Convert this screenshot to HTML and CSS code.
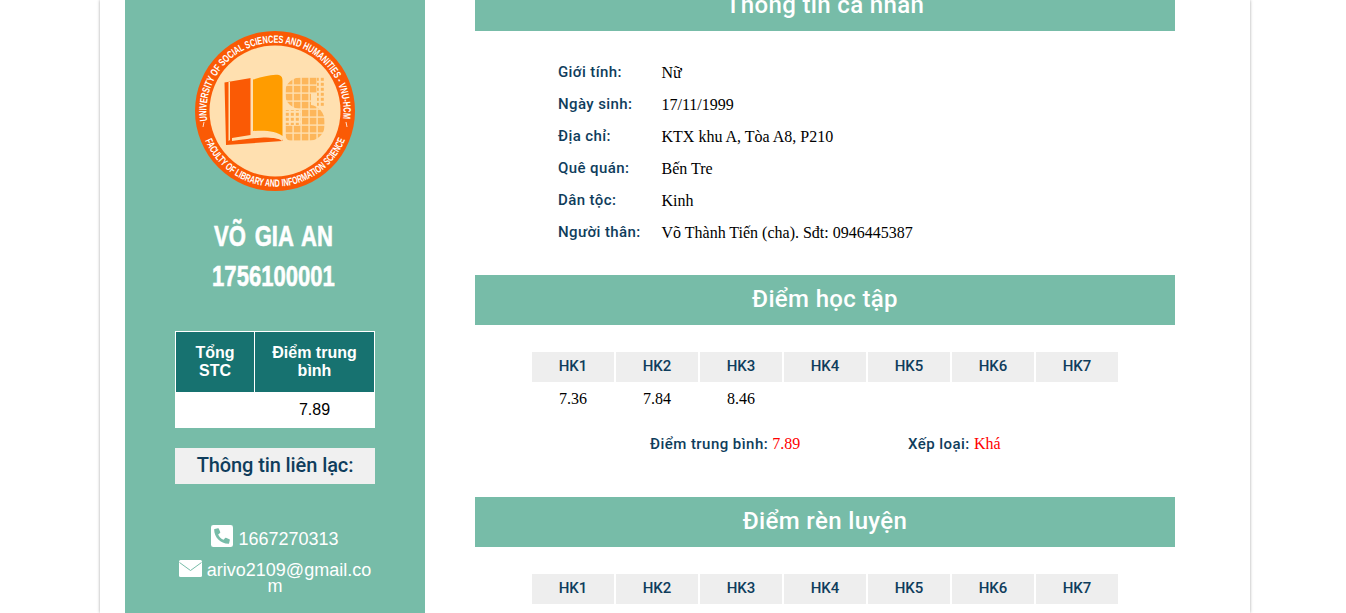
FILE: index.html
```html
<!DOCTYPE html>
<html lang="vi">
<head>
<meta charset="utf-8">
<title>Võ Gia An</title>
<link rel="stylesheet" href="styles.css">
</head>
<body>
<div class="card">
  <aside class="side">
    <svg class="logo" viewBox="0 0 160 160" width="160" height="160">
      <defs>
        <pattern id="sgrid" width="8" height="8" patternUnits="userSpaceOnUse" x="90" y="46">
          <rect width="8" height="8" fill="#ffe0b0"/>
          <rect x="0.8" y="0.8" width="6.6" height="6.6" fill="#fdb65a"/>
        </pattern>
        <pattern id="sdots" width="5" height="5" patternUnits="userSpaceOnUse" x="90" y="46">
          <rect x="0.8" y="0.8" width="3" height="3" fill="#fdb65a"/>
        </pattern>
        <path id="arcTop" d="M 12.2 90 A 68.5 68.5 0 1 1 147.8 90"/>
        <path id="arcBottom" d="M 8 104 A 76 76 0 0 0 152 104"/>
      </defs>
      <circle cx="80" cy="80" r="80" fill="#fa5a05"/>
      <circle cx="80" cy="80" r="65.5" fill="#ffe0b0"/>
      <text class="ring"><textPath href="#arcTop" textLength="232" lengthAdjust="spacingAndGlyphs">UNIVERSITY OF SOCIAL SCIENCES AND HUMANITIES - VNU-HCM</textPath></text>
      <text class="ring"><textPath href="#arcBottom" textLength="178" startOffset="6" lengthAdjust="spacingAndGlyphs">FACULTY OF LIBRARY AND INFORMATION SCIENCE</textPath></text>
      <path d="M8 96l1-5M152 96l-1-5" stroke="#fff" stroke-width="0.8"/>
      <path d="M29.500 51.500 L56 47 L56 104 L87 108 L87.500 110 L31 114 Z" fill="#fa5a05"/>
      <path d="M33.500 51 L35 51 L35 109 L33.500 110 Z" fill="#ffe0b0"/>
      <path d="M55.500 47 L57 47 L57 102 C 70 101 83 101 87 108 L87 110 C 80 105 65 106 37 110 L37 107 L55.500 104 Z" fill="#ffe0b0"/>
      <path d="M58 48.500 C 68 46 76 43 84 44 C 87 45 87.500 47 87.500 50 L87.500 105 C 82 100 70 99 58 100 Z" fill="#ff9c00"/>
      <path d="M90 62 C 90 52 98 46 108 46 L122 46 L122 62 L116 62 L116 74 C 123 75 130 81 130 92 C 130 104 122 110 112 110 L96 110 C 92 110 90 106 90 102 L90 94 L107 94 L107 78 C 97 78 90 72 90 62 Z" fill="url(#sgrid)"/>
      <path d="M122 46 H130 V76 H122 Z M90 79 H106 V94 H90 Z" fill="url(#sdots)"/>
    </svg>
    <h1 class="student">VÕ GIA AN<br>1756100001</h1>
    <table class="summary">
      <thead>
        <tr><th class="col-credits">Tổng STC</th><th>Điểm trung bình</th></tr>
      </thead>
      <tbody>
        <tr><td></td><td>7.89</td></tr>
      </tbody>
    </table>
    <h3 class="contact-title">Thông tin liên lạc:</h3>
    <p class="contact contact-phone">
      <svg class="icon-phone" viewBox="0 0 448 448" width="22" height="22">
        <rect width="448" height="448" rx="48" fill="#fff"/>
        <path transform="translate(448,-32) scale(-1,1)" d="M94 416c-7.033 0-13.057-4.873-14.616-11.627l-14.998-65a15 15 0 0 1 8.707-17.16l69.998-29.999a15 15 0 0 1 17.518 4.289l30.997 37.885c48.944-22.963 88.297-62.858 110.781-110.78l-37.886-30.997a15.001 15.001 0 0 1-4.289-17.518l30-69.998a15 15 0 0 1 17.16-8.707l65 14.998A14.997 14.997 0 0 1 384 126c0 160.292-129.945 290-290 290z" fill="#77bca8"/>
      </svg>
      1667270313
    </p>
    <p class="contact contact-mail">
      <svg class="icon-mail" viewBox="0 0 23 17" width="23" height="17">
        <rect width="23" height="17" rx="1.500" fill="#fff"/>
        <path d="M0.500 2.500 L11.500 10.500 L22.500 2.500" fill="none" stroke="#77bca8" stroke-width="1"/>
      </svg>&nbsp;arivo2109@gmail.com
    </p>
  </aside>
  <main class="main">
    <h2 class="band band-first">Thông tin cá nhân</h2>
    <dl class="info">
      <dt>Giới tính:</dt><dd>Nữ</dd>
      <dt>Ngày sinh:</dt><dd>17/11/1999</dd>
      <dt>Địa chỉ:</dt><dd>KTX khu A, Tòa A8, P210</dd>
      <dt>Quê quán:</dt><dd>Bến Tre</dd>
      <dt>Dân tộc:</dt><dd>Kinh</dd>
      <dt>Người thân:</dt><dd>Võ Thành Tiến (cha). Sđt: 0946445387</dd>
    </dl>
    <h2 class="band">Điểm học tập</h2>
    <div class="terms">
      <div class="term">HK1</div><div class="term">HK2</div><div class="term">HK3</div><div class="term">HK4</div><div class="term">HK5</div><div class="term">HK6</div><div class="term">HK7</div>
      <div class="score">7.36</div><div class="score">7.84</div><div class="score">8.46</div><div class="score"></div><div class="score"></div><div class="score"></div><div class="score"></div>
    </div>
    <div class="totals">
      <p class="total total-avg">Điểm trung bình: <span class="red">7.89</span></p>
      <p class="total">Xếp loại: <span class="red">Khá</span></p>
    </div>
    <h2 class="band">Điểm rèn luyện</h2>
    <div class="terms">
      <div class="term">HK1</div><div class="term">HK2</div><div class="term">HK3</div><div class="term">HK4</div><div class="term">HK5</div><div class="term">HK6</div><div class="term">HK7</div>
    </div>
  </main>
</div>
</body>
</html>
```
FILE: styles.css
```css
* { box-sizing: border-box; }
html, body { height: 100%; }
body {
  margin: 0;
  overflow: hidden;
  background: #fff;
  font-family: "Liberation Serif", serif;
  font-size: 16px;
  color: #000;
}
.card {
  width: 1150px;
  height: 613px;
  margin-left: 100px;
  padding-left: 25px;
  display: flex;
  gap: 50px;
  overflow: hidden;
  box-shadow: 0 0 3px rgba(0, 0, 0, 0.35);
}
.side {
  width: 300px;
  flex: none;
  padding-top: 31px;
  background: #77bca8;
  display: flex;
  flex-direction: column;
  align-items: center;
}
.logo { display: block; flex: none; }
.ring {
  font-family: "Liberation Sans", sans-serif;
  font-weight: 700;
  font-size: 10.5px;
  fill: #fff;
}
.student {
  margin: 25px 4px 35px 0;
  font-family: "Liberation Sans", sans-serif;
  font-size: 30px;
  line-height: 40px;
  font-weight: 700;
  word-spacing: 3.6px;
  color: #fff;
  text-align: center;
  transform: scaleX(0.735);
  -webkit-text-stroke: 0.6px #fff;
}
.summary {
  width: 200px;
  border-collapse: collapse;
  background: #fff;
  font-family: "Liberation Sans", sans-serif;
  font-size: 16px;
}
.summary th {
  height: 61px;
  padding: 0 10px;
  line-height: 18px;
  background: #177270;
  color: #fff;
  font-weight: 700;
  border: 1px solid #fff;
}
.summary .col-credits { width: 79px; }
.summary td { height: 35px; padding: 0; text-align: center; }
.contact-title {
  width: 200px;
  height: 36px;
  margin: 20px 0 0;
  background: #f0f0f0;
  color: #0f3d5c;
  font-family: "Roboto", sans-serif;
  font-size: 20px;
  font-weight: 500;
  letter-spacing: -0.1px;
  line-height: 35px;
  text-align: center;
}
.contact {
  width: 200px;
  margin: 0;
  color: #fff;
  font-family: "Liberation Sans", sans-serif;
  font-size: 18px;
  line-height: 16px;
  text-align: center;
}
.contact-phone { margin-top: 41px; }
.contact-mail { margin-top: 13px; word-break: break-all; }
.icon-phone { vertical-align: -2px; }
.icon-mail { vertical-align: -1px; }
.main { width: 700px; flex: none; }
.band {
  height: 50px;
  margin: 0;
  background: #77bca8;
  color: #fff;
  font-family: "Roboto", sans-serif;
  font-size: 24px;
  font-weight: 500;
  letter-spacing: 0.35px;
  line-height: 48px;
  text-align: center;
}
.band-first { margin-top: -19px; }
.info {
  margin: 26px 0 26px 83px;
  display: grid;
  grid-template-columns: 103.5px 1fr;
  grid-auto-rows: 32px;
}
.info dt {
  color: #0f3d5c;
  font-family: "Roboto", sans-serif;
  font-size: 15px;
  font-weight: 500;
  letter-spacing: 0.4px;
  line-height: 30px;
}
.info dd { margin: 0; line-height: 32px; }
.terms {
  width: 586px;
  margin: 27px 0 0 57px;
  display: grid;
  grid-template-columns: repeat(7, 82px);
  column-gap: 2px;
}
.term {
  height: 30px;
  background: #eee;
  color: #0f3d5c;
  font-family: "Roboto", sans-serif;
  font-size: 15px;
  font-weight: 500;
  line-height: 28px;
  text-align: center;
}
.score { height: 32px; line-height: 33px; text-align: center; }
.totals {
  height: 83px;
  padding: 14px 0 0 175px;
  display: flex;
}
.total {
  margin: 0;
  color: #0f3d5c;
  font-family: "Roboto", sans-serif;
  font-size: 15px;
  font-weight: 500;
  letter-spacing: 0.45px;
  line-height: 32px;
}
.total-avg { width: 258px; }
.red {
  color: #f00;
  font-family: "Liberation Serif", serif;
  font-size: 16px;
  font-weight: 400;
  letter-spacing: 0;
}
```
